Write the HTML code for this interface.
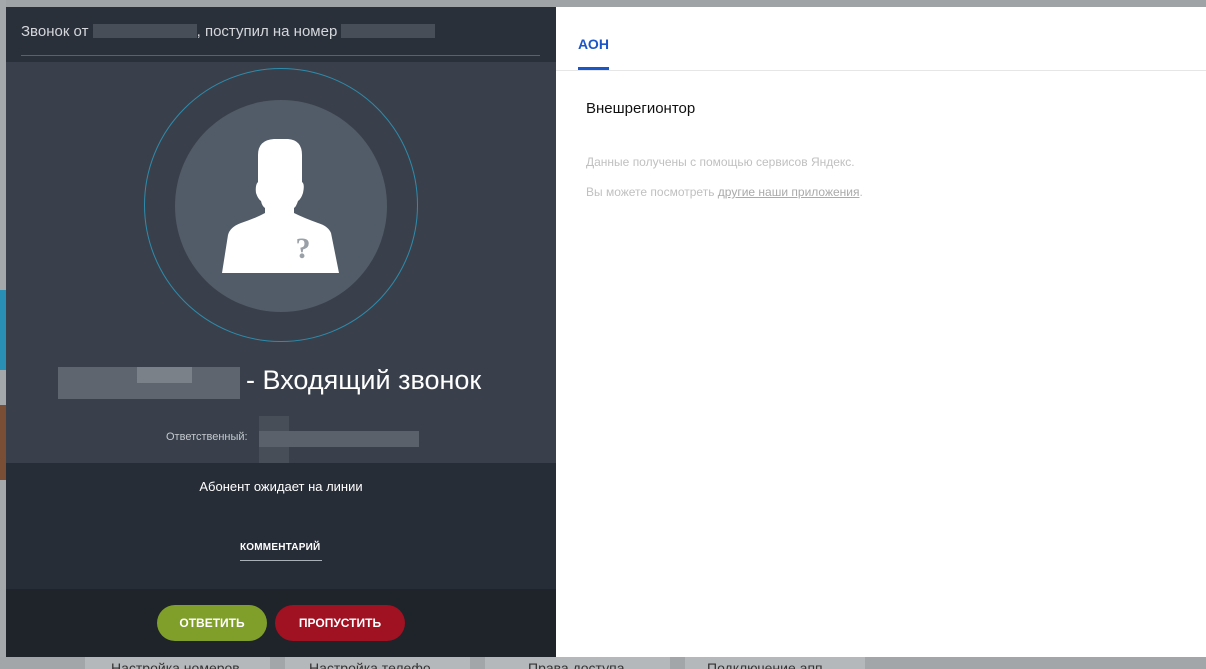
<!DOCTYPE html>
<html><head><meta charset="utf-8"><style>
*{margin:0;padding:0;box-sizing:border-box}
body{width:1206px;height:669px;overflow:hidden;background:#9fa3a5;font-family:"Liberation Sans",Arial,sans-serif;position:relative}
.abs{position:absolute}
</style></head><body>
<div class="abs" style="left:0;top:0;width:6px;height:669px;background:#a4a8aa"></div>
<div class="abs" style="left:0;top:290px;width:6px;height:80px;background:#2a8fb5"></div>
<div class="abs" style="left:0;top:405px;width:6px;height:75px;background:#7a4e35"></div>
<div class="abs" style="left:0;top:657px;width:1206px;height:12px;background:#a3a6a8"></div>
<div class="abs" style="left:85px;top:657px;width:185px;height:12px;background:#b5b8ba;font-size:14px;color:#333;padding-left:26px;line-height:22px;overflow:hidden">Настройка номеров</div>
<div class="abs" style="left:285px;top:657px;width:185px;height:12px;background:#b5b8ba;font-size:14px;color:#333;padding-left:24px;line-height:22px;overflow:hidden">Настройка телефо</div>
<div class="abs" style="left:485px;top:657px;width:185px;height:12px;background:#b5b8ba;font-size:14px;color:#333;padding-left:43px;line-height:22px;overflow:hidden">Права доступа</div>
<div class="abs" style="left:685px;top:657px;width:180px;height:12px;background:#b5b8ba;font-size:14px;color:#333;padding-left:22px;line-height:22px;overflow:hidden">Подключение апп</div>

<div class="abs" style="left:6px;top:7px;width:550px;height:650px;background:#39404b">
  <div class="abs" style="left:0;top:0;width:550px;height:55px;background:#2a303a">
    <div class="abs" style="left:15px;top:16px;font-size:15px;color:#d4d7db;white-space:nowrap">Звонок от <span style="display:inline-block;width:104px;height:14px;background:#474e58;vertical-align:-2px"></span>, поступил на номер <span style="display:inline-block;width:94px;height:14px;background:#474e58;vertical-align:-2px"></span></div>
    <div class="abs" style="left:15px;top:48px;width:519px;height:1px;background:#5a616b"></div>
  </div>
  <svg class="abs" style="left:0;top:0" width="550" height="456">
    <circle cx="275" cy="198" r="136.5" fill="none" stroke="#2e8bab" stroke-width="1"/>
    <circle cx="275" cy="199" r="106" fill="#525c68"/>
    <path d="M252 148 Q252 133 268 132 L282 132 Q296 133 296 148 L296 175 Q299 177 297 186 Q295 192 292 194 Q290 200 288 201 L288 206 Q298 211 312 216 Q322 219 325 226 L333 266 L216 266 L222 228 Q224 220 235 216 Q250 211 259 206 L259 201 Q256 199 255 194 Q252 192 250 186 Q249 178 252 175 Z" fill="#fff"/>
    <text x="297" y="251" font-family="Liberation Serif,serif" font-weight="bold" font-size="30" fill="#9aa0a8" text-anchor="middle">?</text>
  </svg>
  <div class="abs" style="left:52px;top:360px;width:182px;height:32px;background:#5e656f"></div>
  <div class="abs" style="left:131px;top:360px;width:55px;height:16px;background:#7b8189"></div>
  <div class="abs" style="left:240px;top:358px;font-size:27px;color:#fff;white-space:nowrap">- Входящий звонок</div>
  <div class="abs" style="left:160px;top:424px;font-size:11px;color:#c5c9ce">Ответственный:</div>
  <div class="abs" style="left:253px;top:409px;width:30px;height:47px;background:#474e58"></div>
  <div class="abs" style="left:253px;top:424px;width:160px;height:16px;background:#5a616b"></div>
  <div class="abs" style="left:0;top:456px;width:550px;height:126px;background:#272d37">
    <div class="abs" style="left:0;top:16px;width:550px;text-align:center;font-size:13px;color:#fff">Абонент ожидает на линии</div>
    <div class="abs" style="left:234px;top:79px;font-size:10px;font-weight:bold;color:#fff;letter-spacing:0.2px">КОММЕНТАРИЙ</div>
    <div class="abs" style="left:234px;top:97px;width:82px;height:1px;background:#aab0b8"></div>
  </div>
  <div class="abs" style="left:0;top:582px;width:550px;height:68px;background:#1f232a">
    <div class="abs" style="left:151px;top:16px;width:110px;height:36px;border-radius:18px;background:#7f9f2a;color:#fff;font-size:12px;font-weight:bold;text-align:center;line-height:36px">ОТВЕТИТЬ</div>
    <div class="abs" style="left:269px;top:16px;width:130px;height:36px;border-radius:18px;background:#a01122;color:#fff;font-size:12px;font-weight:bold;text-align:center;line-height:36px">ПРОПУСТИТЬ</div>
  </div>
</div>

<div class="abs" style="left:556px;top:7px;width:650px;height:650px;background:#fff">
  <div class="abs" style="left:22px;top:29px;font-size:14px;font-weight:bold;color:#1a56c8">АОН</div>
  <div class="abs" style="left:22px;top:60px;width:31px;height:3px;background:#1a56c8"></div>
  <div class="abs" style="left:0;top:63px;width:650px;height:1px;background:#e6e6e6"></div>
  <div class="abs" style="left:30px;top:93px;font-size:15px;color:#111">Внешрегионтор</div>
  <div class="abs" style="left:30px;top:148px;font-size:12px;color:#c0c0c0">Данные получены с помощью сервисов Яндекс.</div>
  <div class="abs" style="left:30px;top:178px;font-size:12px;color:#c0c0c0">Вы можете посмотреть <span style="text-decoration:underline;color:#aaa">другие наши приложения</span>.</div>
</div>
</body></html>
